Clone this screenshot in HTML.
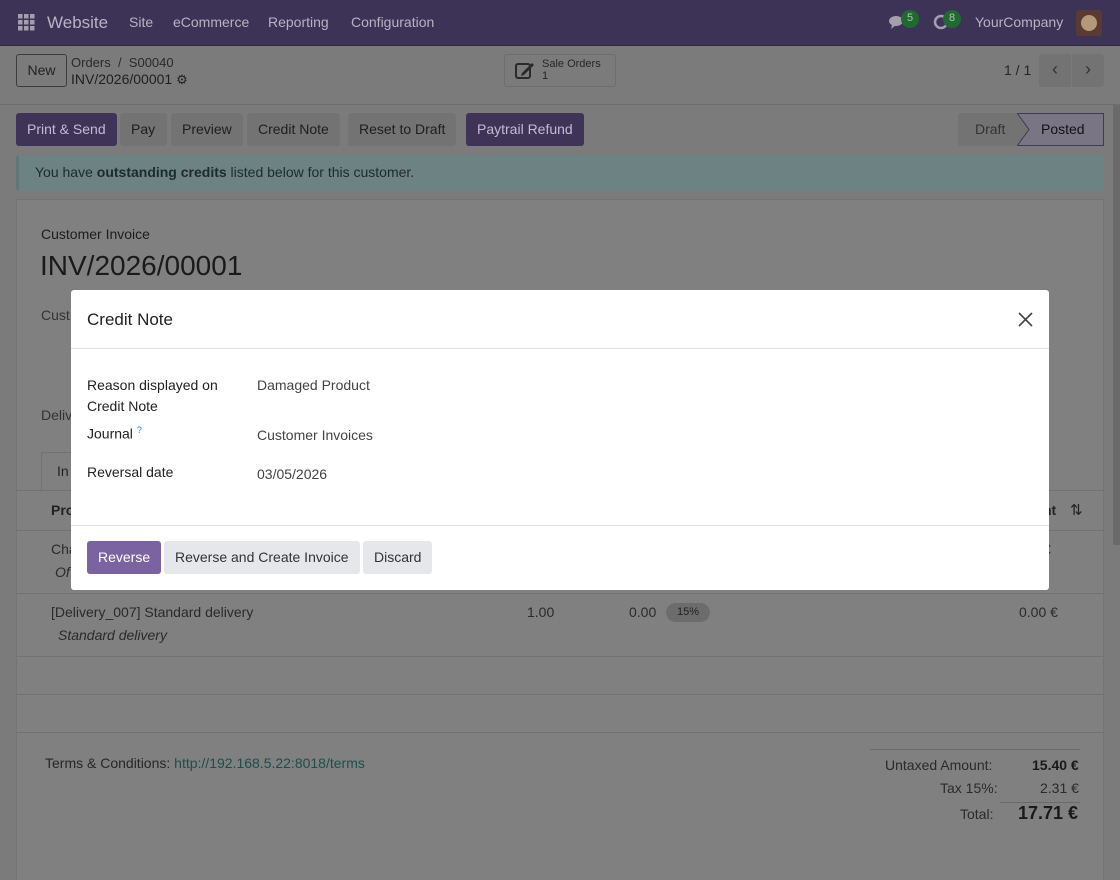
<!DOCTYPE html>
<html><head><meta charset="utf-8"><style>
*{box-sizing:border-box;margin:0;padding:0}
html,body{width:1120px;height:880px;overflow:hidden}
body{background:#7b7b7b;font-family:"Liberation Sans",sans-serif;font-size:14px;color:#1f1f1f;position:relative}
.a{position:absolute;white-space:nowrap}
.nav{position:absolute;left:0;top:0;width:1120px;height:46px;background:#3c3357;border-bottom:1px solid #2f2944}
.nav .a{color:#b7b3c2;font-size:14px}
.btn{position:absolute;top:113px;height:33px;line-height:33px;padding:0 11px;border-radius:3px;font-size:14px;background:#737373;color:#1e1e1e}
.btn.p{background:#3f3358;color:#c2bcd0}
.card{position:absolute;left:16px;top:199px;width:1088px;height:681px;background:#808080;border:1px solid #747474;border-bottom:none}
.hl{position:absolute;left:17px;width:1086px;height:1px;background:#727272}
.modal{position:absolute;left:71px;top:290px;width:978px;height:300px;background:#fff;border-radius:3px}
.modal .a{color:#222}
.mb{position:absolute;top:251px;height:33px;line-height:33px;padding:0 11px;border-radius:3px;background:#e6e7ea;color:#333}
</style></head><body>
<div class="nav">
  <svg class="a" style="left:18px;top:14px" width="17" height="17" viewBox="0 0 17 17" fill="#a39fae"><rect x="0" y="0" width="4.5" height="4.5"/><rect x="6" y="0" width="4.5" height="4.5"/><rect x="12" y="0" width="4.5" height="4.5"/><rect x="0" y="6" width="4.5" height="4.5"/><rect x="6" y="6" width="4.5" height="4.5"/><rect x="12" y="6" width="4.5" height="4.5"/><rect x="0" y="12" width="4.5" height="4.5"/><rect x="6" y="12" width="4.5" height="4.5"/><rect x="12" y="12" width="4.5" height="4.5"/></svg>
  <div class="a" style="left:47px;top:13px;font-size:17px">Website</div>
  <div class="a" style="left:129px;top:14px">Site</div>
  <div class="a" style="left:173px;top:14px">eCommerce</div>
  <div class="a" style="left:268px;top:14px">Reporting</div>
  <div class="a" style="left:351px;top:14px">Configuration</div>
  <svg class="a" style="left:889px;top:15px" width="18" height="14" viewBox="0 0 18 14" fill="#a39fae"><ellipse cx="7" cy="6" rx="7" ry="5"/><path d="M3 10 L2 14 L7 10Z"/></svg>
  <div class="a" style="left:901px;top:10px;width:18px;height:18px;border-radius:9px;background:#1f6b2f;color:#bbb;font-size:11px;text-align:center;line-height:17px">5</div>
  <svg class="a" style="left:933px;top:14px" width="16" height="16" viewBox="0 0 16 16"><circle cx="8" cy="8" r="6" fill="none" stroke="#a39fae" stroke-width="2.5"/></svg>
  <div class="a" style="left:943px;top:10px;width:18px;height:18px;border-radius:9px;background:#1f6b2f;color:#bbb;font-size:11px;text-align:center;line-height:17px">8</div>
  <div class="a" style="left:975px;top:14px">YourCompany</div>
  <div class="a" style="left:1076px;top:10px;width:26px;height:26px;border-radius:3px;background:#5a3a34"><div style="margin:5px 5px;width:16px;height:16px;border-radius:8px;background:#b39a7a"></div></div>
</div>
<div class="a" style="left:0;top:104px;width:1120px;height:1px;background:#6e6e6e"></div>
<div class="a" style="left:16px;top:54px;width:51px;height:33px;border:1px solid #3d3d3d;border-radius:3px;text-align:center;line-height:31px;color:#222">New</div>
<div class="a" style="left:71px;top:55px;font-size:13px;color:#2a2a2a">Orders &nbsp;/&nbsp; S00040</div>
<div class="a" style="left:71px;top:71px;font-size:14px;color:#1f1f1f">INV/2026/00001 <span style="font-size:13px">⚙</span></div>
<div class="a" style="left:504px;top:54px;width:112px;height:33px;border:1px solid #6e6e6e;border-radius:3px"></div>
<svg class="a" style="left:515px;top:61px" width="20" height="19" viewBox="0 0 20 19"><rect x="1" y="3" width="14" height="14" rx="2" fill="none" stroke="#2a2a2a" stroke-width="2"/><path d="M7 12 L17 2 L19 4 L9 14 L6 15Z" fill="#2a2a2a"/></svg>
<div class="a" style="left:542px;top:58px;font-size:11px;line-height:12px;color:#262626">Sale Orders<br>1</div>
<div class="a" style="left:1004px;top:62px;color:#262626">1 / 1</div>
<div class="a" style="left:1039px;top:54px;width:32px;height:33px;background:#737373;border-radius:3px 0 0 3px;text-align:center;line-height:31px;color:#333;font-size:18px">‹</div>
<div class="a" style="left:1072px;top:54px;width:32px;height:33px;background:#737373;border-radius:0 3px 3px 0;text-align:center;line-height:31px;color:#333;font-size:18px">›</div>

<div class="btn p" style="left:16px">Print &amp; Send</div>
<div class="btn" style="left:120px;width:47px">Pay</div>
<div class="btn" style="left:171px">Preview</div>
<div class="btn" style="left:247px">Credit Note</div>
<div class="btn" style="left:348px">Reset to Draft</div>
<div class="btn p" style="left:466px">Paytrail Refund</div>
<div class="a" style="left:958px;top:113px;width:146px;height:33px;background:#737373;border-radius:3px"></div>
<div class="a" style="left:1018px;top:113px;width:86px;height:33px;background:#7a7585;border:1px solid #3f3a5a;border-left:none"></div>
<svg class="a" style="left:1017px;top:113px" width="14" height="33"><path d="M0 0 L12 16.5 L0 33" fill="#737373" stroke="#3f3a5a"/></svg>
<div class="a" style="left:975px;top:121px;color:#333">Draft</div>
<div class="a" style="left:1041px;top:121px;color:#111">Posted</div>

<div class="a" style="left:16px;top:155px;width:1088px;height:36px;background:#6c8283;border-radius:3px;border-left:3px solid #5f7778"></div>
<div class="a" style="left:35px;top:164px;color:#1e2b2c">You have <b>outstanding credits</b> listed below for this customer.</div>

<div class="card"></div>
<div class="a" style="left:1113px;top:105px;width:7px;height:440px;background:#6a6a6a"></div>
<div class="a" style="left:41px;top:226px;color:#1d1d1d">Customer Invoice</div>
<div class="a" style="left:40px;top:250px;font-size:28px;color:#1a1a1a">INV/2026/00001</div>
<div class="a" style="left:41px;top:307px;color:#333">Cust</div>
<div class="a" style="left:41px;top:407px;color:#333">Deliv</div>
<div class="a" style="left:41px;top:452px;width:40px;height:40px;border:1px solid #727272;border-bottom:none;background:#808080"></div>
<div class="a" style="left:57px;top:463px;color:#222">In</div>
<div class="hl" style="top:490px"></div>
<div class="a" style="left:51px;top:502px;color:#222;font-weight:bold">Pro</div>
<div class="a" style="left:1043px;top:502px;color:#222;font-weight:bold">nt</div>
<div class="a" style="left:1070px;top:501px;color:#222;font-size:15px">⇅</div>
<div class="hl" style="top:530px"></div>
<div class="a" style="left:51px;top:541px;color:#2a2a2a">Cha</div>
<div class="a" style="left:55px;top:564px;color:#2a2a2a;font-style:italic">Of</div>
<div class="a" style="left:1043px;top:541px;color:#2a2a2a">€</div>
<div class="hl" style="top:593px"></div>
<div class="a" style="left:51px;top:604px;color:#2a2a2a">[Delivery_007] Standard delivery</div>
<div class="a" style="left:58px;top:627px;color:#2a2a2a;font-style:italic">Standard delivery</div>
<div class="a" style="left:527px;top:604px;color:#2a2a2a">1.00</div>
<div class="a" style="left:629px;top:604px;color:#2a2a2a">0.00</div>
<div class="a" style="left:666px;top:603px;width:44px;height:19px;border-radius:10px;background:#6c6c6c;font-size:11px;text-align:center;line-height:19px;color:#222">15%</div>
<div class="a" style="left:1019px;top:604px;color:#2a2a2a">0.00 €</div>
<div class="hl" style="top:656px"></div>
<div class="hl" style="top:694px"></div>
<div class="hl" style="top:732px"></div>
<div class="a" style="left:45px;top:755px;color:#262626">Terms &amp; Conditions: <span style="color:#1d4e4a">http://192.168.5.22:8018/terms</span></div>
<div class="a" style="left:870px;top:749px;width:210px;height:1px;background:#6a6a6a"></div>
<div class="a" style="left:885px;top:757px;color:#2a2a2a">Untaxed Amount:</div>
<div class="a" style="left:1032px;top:757px;color:#1a1a1a;font-weight:bold">15.40 €</div>
<div class="a" style="left:940px;top:780px;color:#2a2a2a">Tax 15%:</div>
<div class="a" style="left:1040px;top:780px;color:#2a2a2a">2.31 €</div>
<div class="a" style="left:1000px;top:802px;width:80px;height:1px;background:#6a6a6a"></div>
<div class="a" style="left:960px;top:806px;color:#2a2a2a">Total:</div>
<div class="a" style="left:1018px;top:803px;color:#1a1a1a;font-weight:bold;font-size:18px">17.71 €</div>

<div class="modal">
  <div class="a" style="left:16px;top:20px;font-size:17px">Credit Note</div>
  <svg class="a" style="left:947px;top:22px" width="15" height="15"><path d="M1 1L14 14M14 1L1 14" stroke="#444" stroke-width="1.6"/></svg>
  <div class="a" style="left:0;top:58px;width:978px;height:1px;background:#dee2e6"></div>
  <div class="a" style="left:16px;top:85px;line-height:21px;color:#222">Reason displayed on<br>Credit Note</div>
  <div class="a" style="left:186px;top:87px;color:#444">Damaged Product</div>
  <div class="a" style="left:16px;top:135px">Journal <sup style="color:#1a8ea8;font-size:9px">?</sup></div>
  <div class="a" style="left:186px;top:137px;color:#444">Customer Invoices</div>
  <div class="a" style="left:16px;top:174px">Reversal date</div>
  <div class="a" style="left:186px;top:176px;color:#444">03/05/2026</div>
  <div class="a" style="left:0;top:235px;width:978px;height:1px;background:#dee2e6"></div>
  <div class="mb" style="left:16px;background:#7a63a0;color:#fff">Reverse</div>
  <div class="mb" style="left:93px">Reverse and Create Invoice</div>
  <div class="mb" style="left:292px">Discard</div>
</div>
</body></html>
